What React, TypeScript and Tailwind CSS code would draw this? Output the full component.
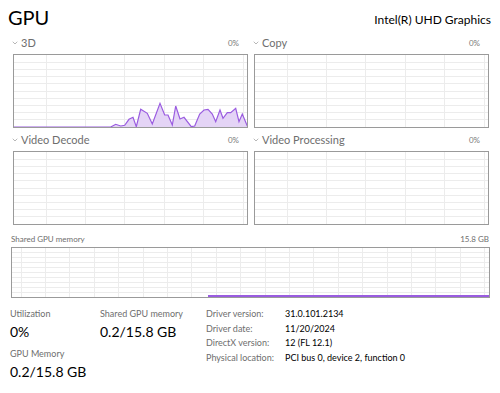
import { ChevronDown } from "lucide-react";

const FONT = { fontFamily: '"Segoe UI", Lato, "Noto Sans", sans-serif' };

const load3d: [number, number][] = [
  [0, 72], [96.7, 72], [101.7, 69.3], [106.7, 71], [110.7, 70.3], [115, 64.3], [119, 62.3],
  [122.3, 71.7], [126.7, 54.3], [133.3, 58.3], [138.3, 69], [146, 48.3], [150.7, 60],
  [154, 60], [158.3, 70], [161.7, 51], [166, 64], [170, 62.3], [177.3, 71.7], [180.7, 71],
  [185.7, 59], [190, 55], [194, 54.3], [198.3, 59], [201.7, 66.7], [206, 55], [209, 63.3],
  [213.3, 57.7], [216.7, 57.7], [221.7, 53.3], [225, 66.7], [228.3, 59], [233.3, 71], [234, 72],
];

function Grid({ w, h, cols, rows, first }: { w: number; h: number; cols: number; rows: number; first: number }) {
  const vs = [];
  for (let x = first; x < w; x += cols) vs.push(x);
  const hs = [];
  for (let i = 1; i < rows; i++) hs.push((h / rows) * i);
  return (
    <g stroke="#ececec" strokeWidth="1" shapeRendering="crispEdges">
      {vs.map((x) => (
        <line key={"v" + x} x1={x} y1={0} x2={x} y2={h} />
      ))}
      {hs.map((y) => (
        <line key={"h" + y} x1={0} y1={y} x2={w} y2={y} />
      ))}
    </g>
  );
}

function Engine({ name, data }: { name: string; data?: [number, number][] }) {
  const pts = data?.map(([x, y]) => `${x},${y}`).join(" ");
  return (
    <div className="flex flex-col">
      <div className="flex h-[16px] items-center justify-between pl-[11px] pr-[2px]">
        <div className="flex items-center gap-[2px] text-[11px] text-[#6e6e6e]">
          <ChevronDown size={8} strokeWidth={1.5} />
          <span>{name}</span>
        </div>
        <span className="text-[8px] text-[#7a7a7a]">0%</span>
      </div>
      <div className="mt-[3px] ml-[13px] h-[74px] w-[235px] border border-[#9a9a9a] bg-white">
        <svg width="233" height="72" viewBox="0 0 233 72" className="block">
          <Grid w={233} h={72} cols={39.4} rows={10} first={32} />
          {pts && (
            <>
              <polygon points={pts} fill="#e4d4f6" />
              <polyline points={pts} fill="none" stroke="#9a5ce0" strokeWidth="1.2" />
            </>
          )}
        </svg>
      </div>
    </div>
  );
}

export default function App() {
  return (
    <div className="h-[393px] w-[500px] overflow-hidden bg-white text-black" style={FONT}>
      <div className="flex items-end justify-between pl-[8px] pr-[9px] pt-[2px]">
        <div className="text-[20px] leading-[30px]">GPU</div>
        <div className="pb-[3px] text-[12px]">Intel(R) UHD Graphics</div>
      </div>

      <div className="mt-[3px] grid grid-cols-[241px_241px] gap-y-[4px]">
        <Engine name="3D" data={load3d} />
        <Engine name="Copy" />
        <Engine name="Video Decode" />
        <Engine name="Video Processing" />
      </div>

      <div className="mt-[8px] flex items-center justify-between pl-[11px] pr-[11px] text-[8px] text-[#6e6e6e]">
        <span>Shared GPU memory</span>
        <span>15.8 GB</span>
      </div>
      <div className="ml-[11px] mt-[2px] h-[51px] w-[479px] border border-[#9a9a9a] bg-white">
        <svg width="477" height="49" viewBox="0 0 477 49" className="block">
          <Grid w={477} h={49} cols={24.4} rows={10} first={9} />
          <line x1={196} y1={48} x2={477} y2={48} stroke="#9a5ce0" strokeWidth="2" />
        </svg>
      </div>

      <div className="mt-[9px] flex items-start whitespace-nowrap pl-[10px]">
        <div className="w-[90px]">
          <div className="text-[9px] leading-[14px] text-[#6e6e6e]">Utilization</div>
          <div className="text-[14px] leading-[21px]">0%</div>
          <div className="mt-[5px] text-[9px] leading-[14px] text-[#6e6e6e]">GPU Memory</div>
          <div className="text-[14px] leading-[21px]">0.2/15.8 GB</div>
        </div>
        <div className="w-[106px]">
          <div className="text-[9px] leading-[14px] text-[#6e6e6e]">Shared GPU memory</div>
          <div className="text-[14px] leading-[21px]">0.2/15.8 GB</div>
        </div>
        <div className="grid grid-cols-[79px_auto] content-start text-[9px] leading-[14.5px]">
          <span className="text-[#6e6e6e]">Driver version:</span>
          <span>31.0.101.2134</span>
          <span className="text-[#6e6e6e]">Driver date:</span>
          <span>11/20/2024</span>
          <span className="text-[#6e6e6e]">DirectX version:</span>
          <span>12 (FL 12.1)</span>
          <span className="text-[#6e6e6e]">Physical location:</span>
          <span>PCI bus 0, device 2, function 0</span>
        </div>
      </div>
    </div>
  );
}
